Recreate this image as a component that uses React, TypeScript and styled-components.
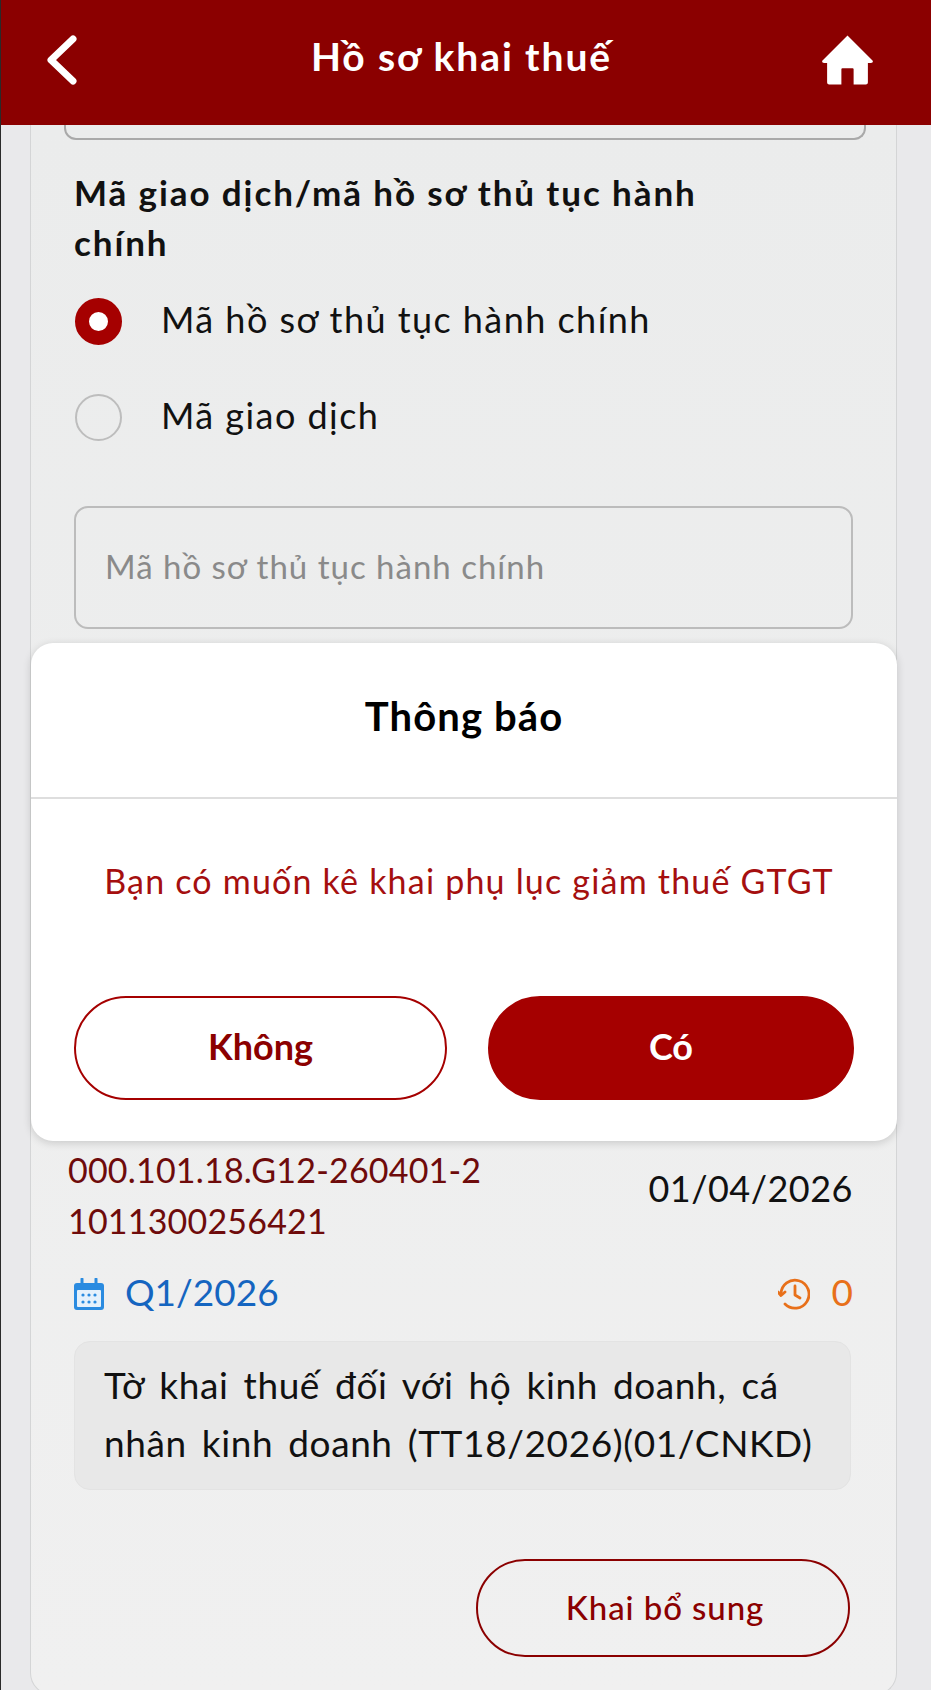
import styled, { createGlobalStyle } from "styled-components";

const GlobalStyle = createGlobalStyle`
  html, body {
    margin: 0;
    padding: 0;
    background: #e9e9eb;
  }
  * {
    box-sizing: border-box;
  }
`;

const Page = styled.div`
  position: relative;
  width: 931px;
  height: 1690px;
  overflow: hidden;
  border-left: 1px solid #2a2a2a;
  background: #e9e9eb;
  font-family: "Lato", "Noto Sans", sans-serif;
  color: #111;
`;

const Header = styled.header`
  display: grid;
  grid-template-columns: 1fr auto 1fr;
  align-items: center;
  height: 125px;
  padding: 0 57px 6px 43px;
  background: #8b0000;
`;

const HeaderTitle = styled.h1`
  margin: 0 0 8px 5px;
  color: #fff;
  font-size: 39px;
  font-weight: 700;
  letter-spacing: 1.9px;
`;

const HomeButton = styled.div`
  display: flex;
  justify-content: flex-end;
`;

const Card = styled.main`
  width: 867px;
  height: 1570px;
  margin-left: 29px;
  padding: 0 43px;
  background: linear-gradient(#ebecec, #f0f0f0);
  border: solid #d4d5d6;
  border-width: 0 1px 1px;
  border-radius: 0 0 22px 22px;
`;

const ClippedInput = styled.div`
  height: 15px;
  margin: 0 -13px 0 -10px;
  border: solid #a9a9a9;
  border-width: 0 2px 2px;
  border-radius: 0 0 12px 12px;
`;

const FieldLabel = styled.div`
  width: 660px;
  margin: 27px 0 6px;
  font-size: 35px;
  font-weight: 700;
  line-height: 50px;
  letter-spacing: 1.9px;
`;

const RadioRow = styled.div`
  display: flex;
  align-items: center;
  gap: 39px;
  height: 96px;
  padding-left: 1px;
  font-size: 36px;
  letter-spacing: 1.45px;
`;

const RadioLabel = styled.span`
  margin-bottom: 4px;
`;

const Radio = styled.span<{ $checked?: boolean }>`
  flex: none;
  width: 47px;
  height: 47px;
  border-radius: 50%;
  background: ${(props) => (props.$checked ? "#fff" : "transparent")};
  border: ${(props) => (props.$checked ? "14px solid #a50000" : "2px solid #bdbdbd")};
`;

const TextInput = styled.div`
  display: flex;
  align-items: center;
  height: 123px;
  margin-top: 41px;
  padding: 0 0 4px 29px;
  border: 2px solid #bcbcbc;
  border-radius: 14px;
  color: #8a8a8a;
  font-size: 33px;
  letter-spacing: 1px;
`;

const ResultHead = styled.div`
  display: flex;
  justify-content: space-between;
  align-items: center;
  margin: 515px 0 0 -6px;
`;

const ResultCode = styled.div`
  color: #6e0b0b;
  font-size: 34px;
  line-height: 51px;
  letter-spacing: 0.2px;
`;

const ResultDate = styled.div`
  margin-bottom: 15px;
  font-size: 36px;
  letter-spacing: 0.5px;
`;

const MetaRow = styled.div`
  display: flex;
  justify-content: space-between;
  align-items: center;
  margin-top: 21px;
  height: 48px;
`;

const MetaItem = styled.div<{ $color: string; $gap: number }>`
  display: flex;
  align-items: center;
  gap: ${(props) => props.$gap}px;
  color: ${(props) => props.$color};
  font-size: 37px;
`;

const MetaIcon = styled.span`
  display: flex;
  margin-top: 6px;
`;

const DeclarationBox = styled.div`
  margin-top: 26px;
  width: 777px;
  padding: 13.5px 20px 17.5px 29px;
  border: 1px solid #e3e3e3;
  border-radius: 16px;
  background: #e8e8e8;
  font-size: 37px;
  line-height: 58px;
  letter-spacing: 0.6px;
  word-spacing: 5px;
`;

const Actions = styled.div`
  display: flex;
  justify-content: flex-end;
  margin: 69px 3px 0 0;
`;

const OutlineButton = styled.div`
  display: flex;
  align-items: center;
  justify-content: center;
  width: 374px;
  height: 98px;
  padding: 0 0 2px 4px;
  border: 2px solid #8b0000;
  border-radius: 49px;
  color: #8b0000;
  font-size: 33px;
  font-weight: 500;
  letter-spacing: 0.9px;
`;

const Modal = styled.section`
  position: absolute;
  top: 643px;
  left: 30px;
  width: 866px;
  height: 498px;
  border-radius: 22px;
  background: #fff;
  box-shadow: 0 2px 8px rgba(0, 0, 0, 0.16);
`;

const ModalTitle = styled.div`
  display: flex;
  align-items: center;
  justify-content: center;
  height: 156px;
  padding-bottom: 8px;
  border-bottom: 2px solid #dedede;
  color: #000;
  font-size: 40px;
  font-weight: 700;
  letter-spacing: 1.1px;
`;

const ModalMessage = styled.div`
  display: flex;
  align-items: center;
  justify-content: center;
  height: 167px;
  padding: 0 0 4px 10px;
  color: #a50f0f;
  font-size: 34px;
  letter-spacing: 1.2px;
`;

const ModalActions = styled.div`
  display: grid;
  grid-template-columns: 373px 366px;
  justify-content: space-between;
  margin-top: 30px;
  padding: 0 43px;
`;

const ModalButton = styled.div<{ $primary?: boolean }>`
  display: flex;
  align-items: center;
  justify-content: center;
  height: 104px;
  padding-bottom: 4px;
  border: 2px solid #a50000;
  border-radius: 52px;
  background: ${(props) => (props.$primary ? "#a50000" : "#fff")};
  color: ${(props) => (props.$primary ? "#fff" : "#8b0000")};
  font-size: 36px;
  font-weight: 700;
`;

const BackIcon = () => (
  <svg width="34" height="52" viewBox="0 0 34 52" fill="none">
    <path d="M29 5 L7 26 L29 47" stroke="#fff" strokeWidth="7" strokeLinecap="round" strokeLinejoin="round" />
  </svg>
);

const HomeIcon = () => (
  <svg width="53" height="50" viewBox="0 0 52 48" fill="#fff">
    <path d="M26 0 L51 25 Q51 27 49 27 L46 27 L46 46 Q46 48 44 48 L32 48 L32 33 Q32 32 31 32 L21 32 Q20 32 20 33 L20 48 L8 48 Q6 48 6 46 L6 27 L3 27 Q1 27 1 25 Z" />
  </svg>
);

const CalendarIcon = () => (
  <svg width="30" height="32" viewBox="0 0 30 32" fill="none">
    <rect x="0" y="5" width="30" height="27" rx="3" fill="#2a8be0" />
    <rect x="3" y="12" width="24" height="17" rx="1" fill="#e6f1fb" />
    <path d="M8 1 V8 M22 1 V8" stroke="#2a8be0" strokeWidth="3" strokeLinecap="round" />
    <g fill="#2a8be0">
      <circle cx="9" cy="17" r="1.6" />
      <circle cx="15" cy="17" r="1.6" />
      <circle cx="21" cy="17" r="1.6" />
      <circle cx="9" cy="24" r="1.6" />
      <circle cx="15" cy="24" r="1.6" />
      <circle cx="21" cy="24" r="1.6" />
    </g>
  </svg>
);

const HistoryIcon = () => (
  <svg width="32" height="32" viewBox="0 0 32 32" fill="none" stroke="#e8701a" strokeWidth="2.8" strokeLinecap="round" strokeLinejoin="round">
    <path d="M3 16 A14 14 0 1 1 7 26" />
    <path d="M0 14 L3 17.5 L7 14" />
    <path d="M17 8 V17 L22 20" />
  </svg>
);

export default function App() {
  return (
    <Page>
      <GlobalStyle />
      <Header>
        <BackIcon />
        <HeaderTitle>Hồ sơ khai thuế</HeaderTitle>
        <HomeButton>
          <HomeIcon />
        </HomeButton>
      </Header>
      <Card>
        <ClippedInput />
        <FieldLabel>Mã giao dịch/mã hồ sơ thủ tục hành chính</FieldLabel>
        <RadioRow>
          <Radio $checked />
          <RadioLabel>Mã hồ sơ thủ tục hành chính</RadioLabel>
        </RadioRow>
        <RadioRow>
          <Radio />
          <RadioLabel>Mã giao dịch</RadioLabel>
        </RadioRow>
        <TextInput>Mã hồ sơ thủ tục hành chính</TextInput>
        <ResultHead>
          <ResultCode>
            000.101.18.G12-260401-2
            <br />
            1011300256421
          </ResultCode>
          <ResultDate>01/04/2026</ResultDate>
        </ResultHead>
        <MetaRow>
          <MetaItem $color="#1565c0" $gap={21}>
            <MetaIcon>
              <CalendarIcon />
            </MetaIcon>
            Q1/2026
          </MetaItem>
          <MetaItem $color="#e8701a" $gap={22}>
            <MetaIcon>
              <HistoryIcon />
            </MetaIcon>
            0
          </MetaItem>
        </MetaRow>
        <DeclarationBox>
          Tờ khai thuế đối với hộ kinh doanh, cá
          <br />
          nhân kinh doanh (TT18/2026)(01/CNKD)
        </DeclarationBox>
        <Actions>
          <OutlineButton>Khai bổ sung</OutlineButton>
        </Actions>
      </Card>
      <Modal>
        <ModalTitle>Thông báo</ModalTitle>
        <ModalMessage>Bạn có muốn kê khai phụ lục giảm thuế GTGT</ModalMessage>
        <ModalActions>
          <ModalButton>Không</ModalButton>
          <ModalButton $primary>Có</ModalButton>
        </ModalActions>
      </Modal>
    </Page>
  );
}
